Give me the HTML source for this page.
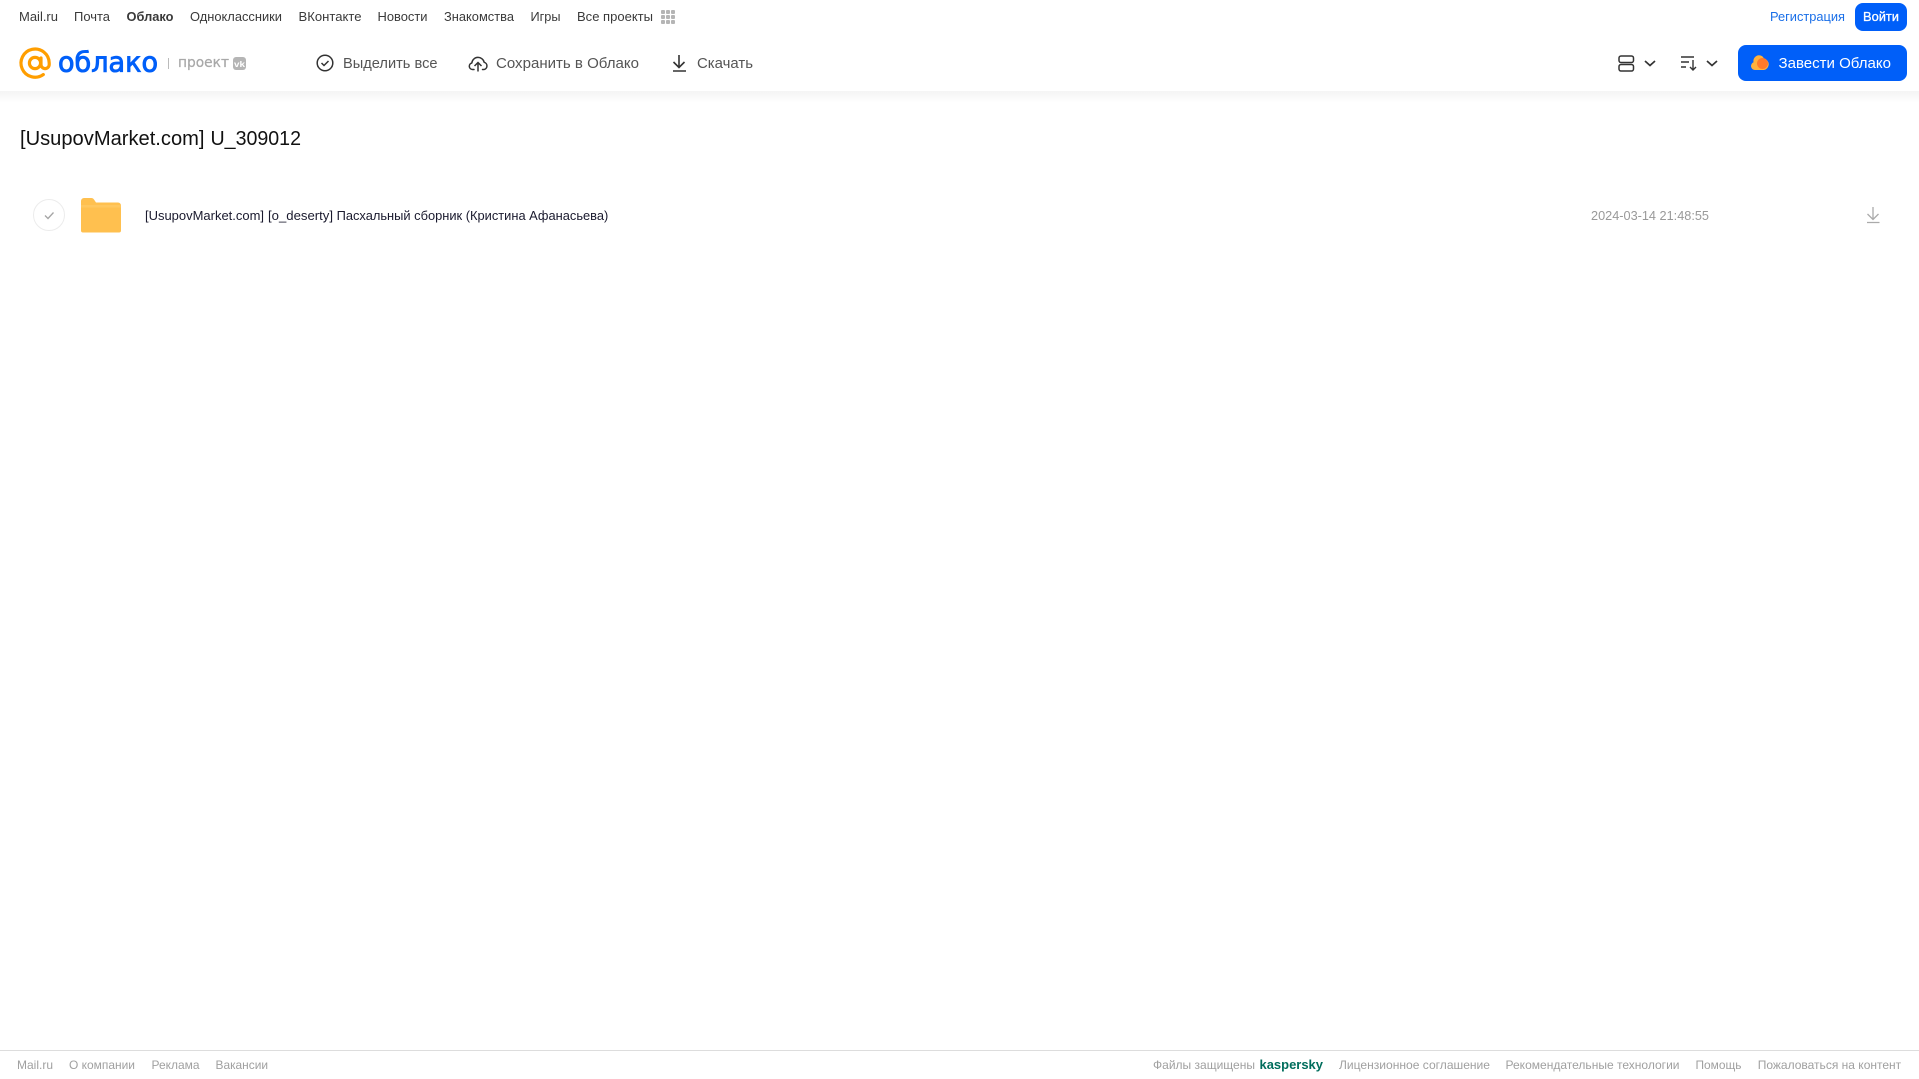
<!DOCTYPE html>
<html lang="ru"><head><meta charset="utf-8"><title>Облако</title>
<style>
html,body{margin:0;padding:0;background:#fff;width:1919px;height:1079px;overflow:hidden}
svg{display:block;position:absolute;left:0;top:0}
text{font-family:"Liberation Sans","Noto Sans CJK SC",sans-serif;dominant-baseline:auto}
.n{font-size:13px;fill:#3a3a3a}
.a{font-size:14.5px;fill:#555}
.f{font-size:12px;fill:#a0a0a0}
</style></head><body>
<svg width="1919" height="1079" viewBox="0 0 1919 1079" xmlns="http://www.w3.org/2000/svg">
<defs>
<linearGradient id="sh" x1="0" y1="0" x2="0" y2="1"><stop offset="0" stop-color="#f4f4f4"/><stop offset="1" stop-color="#fff"/></linearGradient>
</defs>
<rect x="0" y="91" width="1919" height="12" fill="url(#sh)"/>
<!-- top nav -->
<text class="n" x="19" y="21" textLength="39" lengthAdjust="spacingAndGlyphs">Mail.ru</text>
<text class="n" x="74" y="21" textLength="36" lengthAdjust="spacingAndGlyphs">Почта</text>
<text class="n" x="126.500" y="21" textLength="47" lengthAdjust="spacingAndGlyphs" font-weight="700">Облако</text>
<text class="n" x="190" y="21" textLength="92" lengthAdjust="spacingAndGlyphs">Одноклассники</text>
<text class="n" x="298.500" y="21" textLength="63" lengthAdjust="spacingAndGlyphs">ВКонтакте</text>
<text class="n" x="377.500" y="21" textLength="50" lengthAdjust="spacingAndGlyphs">Новости</text>
<text class="n" x="444" y="21" textLength="70" lengthAdjust="spacingAndGlyphs">Знакомства</text>
<text class="n" x="530.500" y="21" textLength="30" lengthAdjust="spacingAndGlyphs">Игры</text>
<text class="n" x="577" y="21" textLength="76" lengthAdjust="spacingAndGlyphs">Все проекты</text>
<g fill="#b5b5b5">
<rect x="661" y="10" width="4" height="4" rx="1"/><rect x="666" y="10" width="4" height="4" rx="1"/><rect x="671" y="10" width="4" height="4" rx="1"/>
<rect x="661" y="15" width="4" height="4" rx="1"/><rect x="666" y="15" width="4" height="4" rx="1"/><rect x="671" y="15" width="4" height="4" rx="1"/>
<rect x="661" y="20" width="4" height="4" rx="1"/><rect x="666" y="20" width="4" height="4" rx="1"/><rect x="671" y="20" width="4" height="4" rx="1"/>
</g>
<text x="1770" y="21" font-size="13" fill="#1a6fe8" textLength="75" lengthAdjust="spacingAndGlyphs">Регистрация</text>
<rect x="1855" y="3" width="52" height="28" rx="8" fill="#005ff9"/>
<text x="1863" y="21" font-size="13" fill="#fff" stroke="#fff" stroke-width=".3" textLength="36" lengthAdjust="spacingAndGlyphs">Войти</text>
<!-- logo -->
<circle cx="35" cy="63" r="5.600" fill="none" stroke="#ff9e00" stroke-width="3.200"/>
<path d="M43.300 74.600A14.100 14.100 0 1 1 49.200 63v1.500a4.100 4.100 0 0 1-8.200 0V58" fill="none" stroke="#ff9e00" stroke-width="3.200" stroke-linecap="round"/>
<text x="58" y="71.500" font-size="28" fill="#005ff9" stroke="#005ff9" stroke-width=".9" style="font-family:'DejaVu Sans',sans-serif" textLength="100" lengthAdjust="spacingAndGlyphs">облако</text>
<rect x="168" y="58" width="1" height="11" fill="#bbb"/>
<text x="178" y="67" font-size="14.500" fill="#a8a8a8" stroke="#a8a8a8" stroke-width=".25" style="font-family:'DejaVu Sans',sans-serif" textLength="51" lengthAdjust="spacingAndGlyphs">проект</text>
<rect x="233" y="57" width="13" height="13" rx="3" fill="#b5b5b5"/>
<text x="234" y="67" font-size="8.500" font-weight="700" fill="#fff" textLength="11" lengthAdjust="spacingAndGlyphs">vk</text>
<!-- actions -->
<circle cx="325" cy="63" r="7.800" fill="none" stroke="#333" stroke-width="1.500"/>
<path d="M321.500 63l2.500 2.500 4.500-4.500" fill="none" stroke="#333" stroke-width="1.500"/>
<text class="a" x="343" y="68" textLength="94.500" lengthAdjust="spacingAndGlyphs">Выделить все</text>
<path d="M474 69.500h-1.500a3.300 3.300 0 0 1-.7-6.500 6.300 6.300 0 0 1 12.400-.7 3.700 3.700 0 0 1-.2 7.200h-1.500" fill="none" stroke="#333" stroke-width="1.500" stroke-linecap="round" stroke-linejoin="round"/>
<path d="M478 71.500v-9M474.500 66l3.500-3.500 3.500 3.500" fill="none" stroke="#333" stroke-width="1.500"/>
<text class="a" x="496" y="68" textLength="143" lengthAdjust="spacingAndGlyphs">Сохранить в Облако</text>
<path d="M679 55v12M673.500 62l5.500 5.500 5.500-5.500M673 71h13" fill="none" stroke="#333" stroke-width="1.600"/>
<text class="a" x="697" y="68" textLength="56" lengthAdjust="spacingAndGlyphs">Скачать</text>
<!-- right controls -->
<rect x="1619" y="56" width="14.500" height="6.500" rx="2" fill="none" stroke="#333" stroke-width="1.500"/>
<rect x="1619" y="64.500" width="14.500" height="6.500" rx="2" fill="none" stroke="#333" stroke-width="1.500"/>
<path d="M1645 61l5 4.500 5-4.500" fill="none" stroke="#333" stroke-width="1.700"/>
<path d="M1681 57h13M1681 62h8M1681 67h5" fill="none" stroke="#333" stroke-width="1.400"/>
<path d="M1693 60v10M1690 67l3 3 3-3" fill="none" stroke="#333" stroke-width="1.400"/>
<path d="M1707 61l5 4.500 5-4.500" fill="none" stroke="#333" stroke-width="1.700"/>
<rect x="1738" y="45" width="169" height="36" rx="8" fill="#005ff9"/>
<path d="M1755 70a4 4 0 0 1-1.500-7.700 5.800 5.800 0 0 1 5.500-7 5.500 5.500 0 0 1 5 3.300 5.800 5.800 0 0 1 0 11.400z" fill="#ffb13d"/>
<circle cx="1762.500" cy="63.500" r="5.500" fill="#ff7a2b"/>
<text x="1778.500" y="68" font-size="14.500" fill="#fff" textLength="112.500" lengthAdjust="spacingAndGlyphs">Завести Облако</text>
<!-- title -->
<text x="20" y="145" font-size="20" fill="#111" textLength="184.500" lengthAdjust="spacingAndGlyphs">[UsupovMarket.com]</text>
<text x="210.500" y="145" font-size="20" fill="#111" textLength="90.500" lengthAdjust="spacingAndGlyphs">U_309012</text>
<!-- row -->
<circle cx="49" cy="215" r="15.500" fill="#fff" stroke="#ececec"/>
<path d="M45 215.500l3 3 5.500-6" fill="none" stroke="#a5a5a5" stroke-width="1.300"/>
<path d="M81 201a3 3 0 0 1 3-3h7.500a3 3 0 0 1 2.500 1.500l2 3h22a3 3 0 0 1 3 3v25a2 2 0 0 1-2 2H83a2 2 0 0 1-2-2z" fill="#ffc04f"/>
<path d="M81 205h40v2.500H81z" fill="#ffcb6b" opacity=".6"/>
<text x="145" y="220" font-size="13" fill="#1a1a2e" textLength="119" lengthAdjust="spacingAndGlyphs">[UsupovMarket.com]</text>
<text x="268" y="220" font-size="13" fill="#1a1a2e" textLength="65" lengthAdjust="spacingAndGlyphs">[o_deserty]</text>
<text x="336.600" y="220" font-size="13" fill="#1a1a2e" textLength="271.700" lengthAdjust="spacingAndGlyphs">Пасхальный сборник (Кристина Афанасьева)</text>
<text x="1591" y="220" font-size="13" fill="#999" textLength="118" lengthAdjust="spacingAndGlyphs">2024-03-14 21:48:55</text>
<path d="M1873 207v12M1867.500 214l5.500 5.500 5.500-5.500M1867 222.500h12.500" fill="none" stroke="#aaa" stroke-width="1.300"/>
<!-- footer -->
<rect x="0" y="1050" width="1919" height="1" fill="#ddd"/>
<text class="f" x="17" y="1069" textLength="36" lengthAdjust="spacingAndGlyphs">Mail.ru</text>
<text class="f" x="69" y="1069" textLength="66" lengthAdjust="spacingAndGlyphs">О компании</text>
<text class="f" x="151.500" y="1069" textLength="48" lengthAdjust="spacingAndGlyphs">Реклама</text>
<text class="f" x="215.500" y="1069" textLength="52.500" lengthAdjust="spacingAndGlyphs">Вакансии</text>
<text class="f" x="1153" y="1069" textLength="102" lengthAdjust="spacingAndGlyphs">Файлы защищены</text>
<text x="1259.500" y="1069" font-size="13" font-weight="700" fill="#006d5c" textLength="63.500" lengthAdjust="spacingAndGlyphs">kaspersky</text>
<text class="f" x="1339" y="1069" textLength="151" lengthAdjust="spacingAndGlyphs">Лицензионное соглашение</text>
<text class="f" x="1505.500" y="1069" textLength="174" lengthAdjust="spacingAndGlyphs">Рекомендательные технологии</text>
<text class="f" x="1695.500" y="1069" textLength="46" lengthAdjust="spacingAndGlyphs">Помощь</text>
<text class="f" x="1757.700" y="1069" textLength="143.500" lengthAdjust="spacingAndGlyphs">Пожаловаться на контент</text>
</svg>
</body></html>
